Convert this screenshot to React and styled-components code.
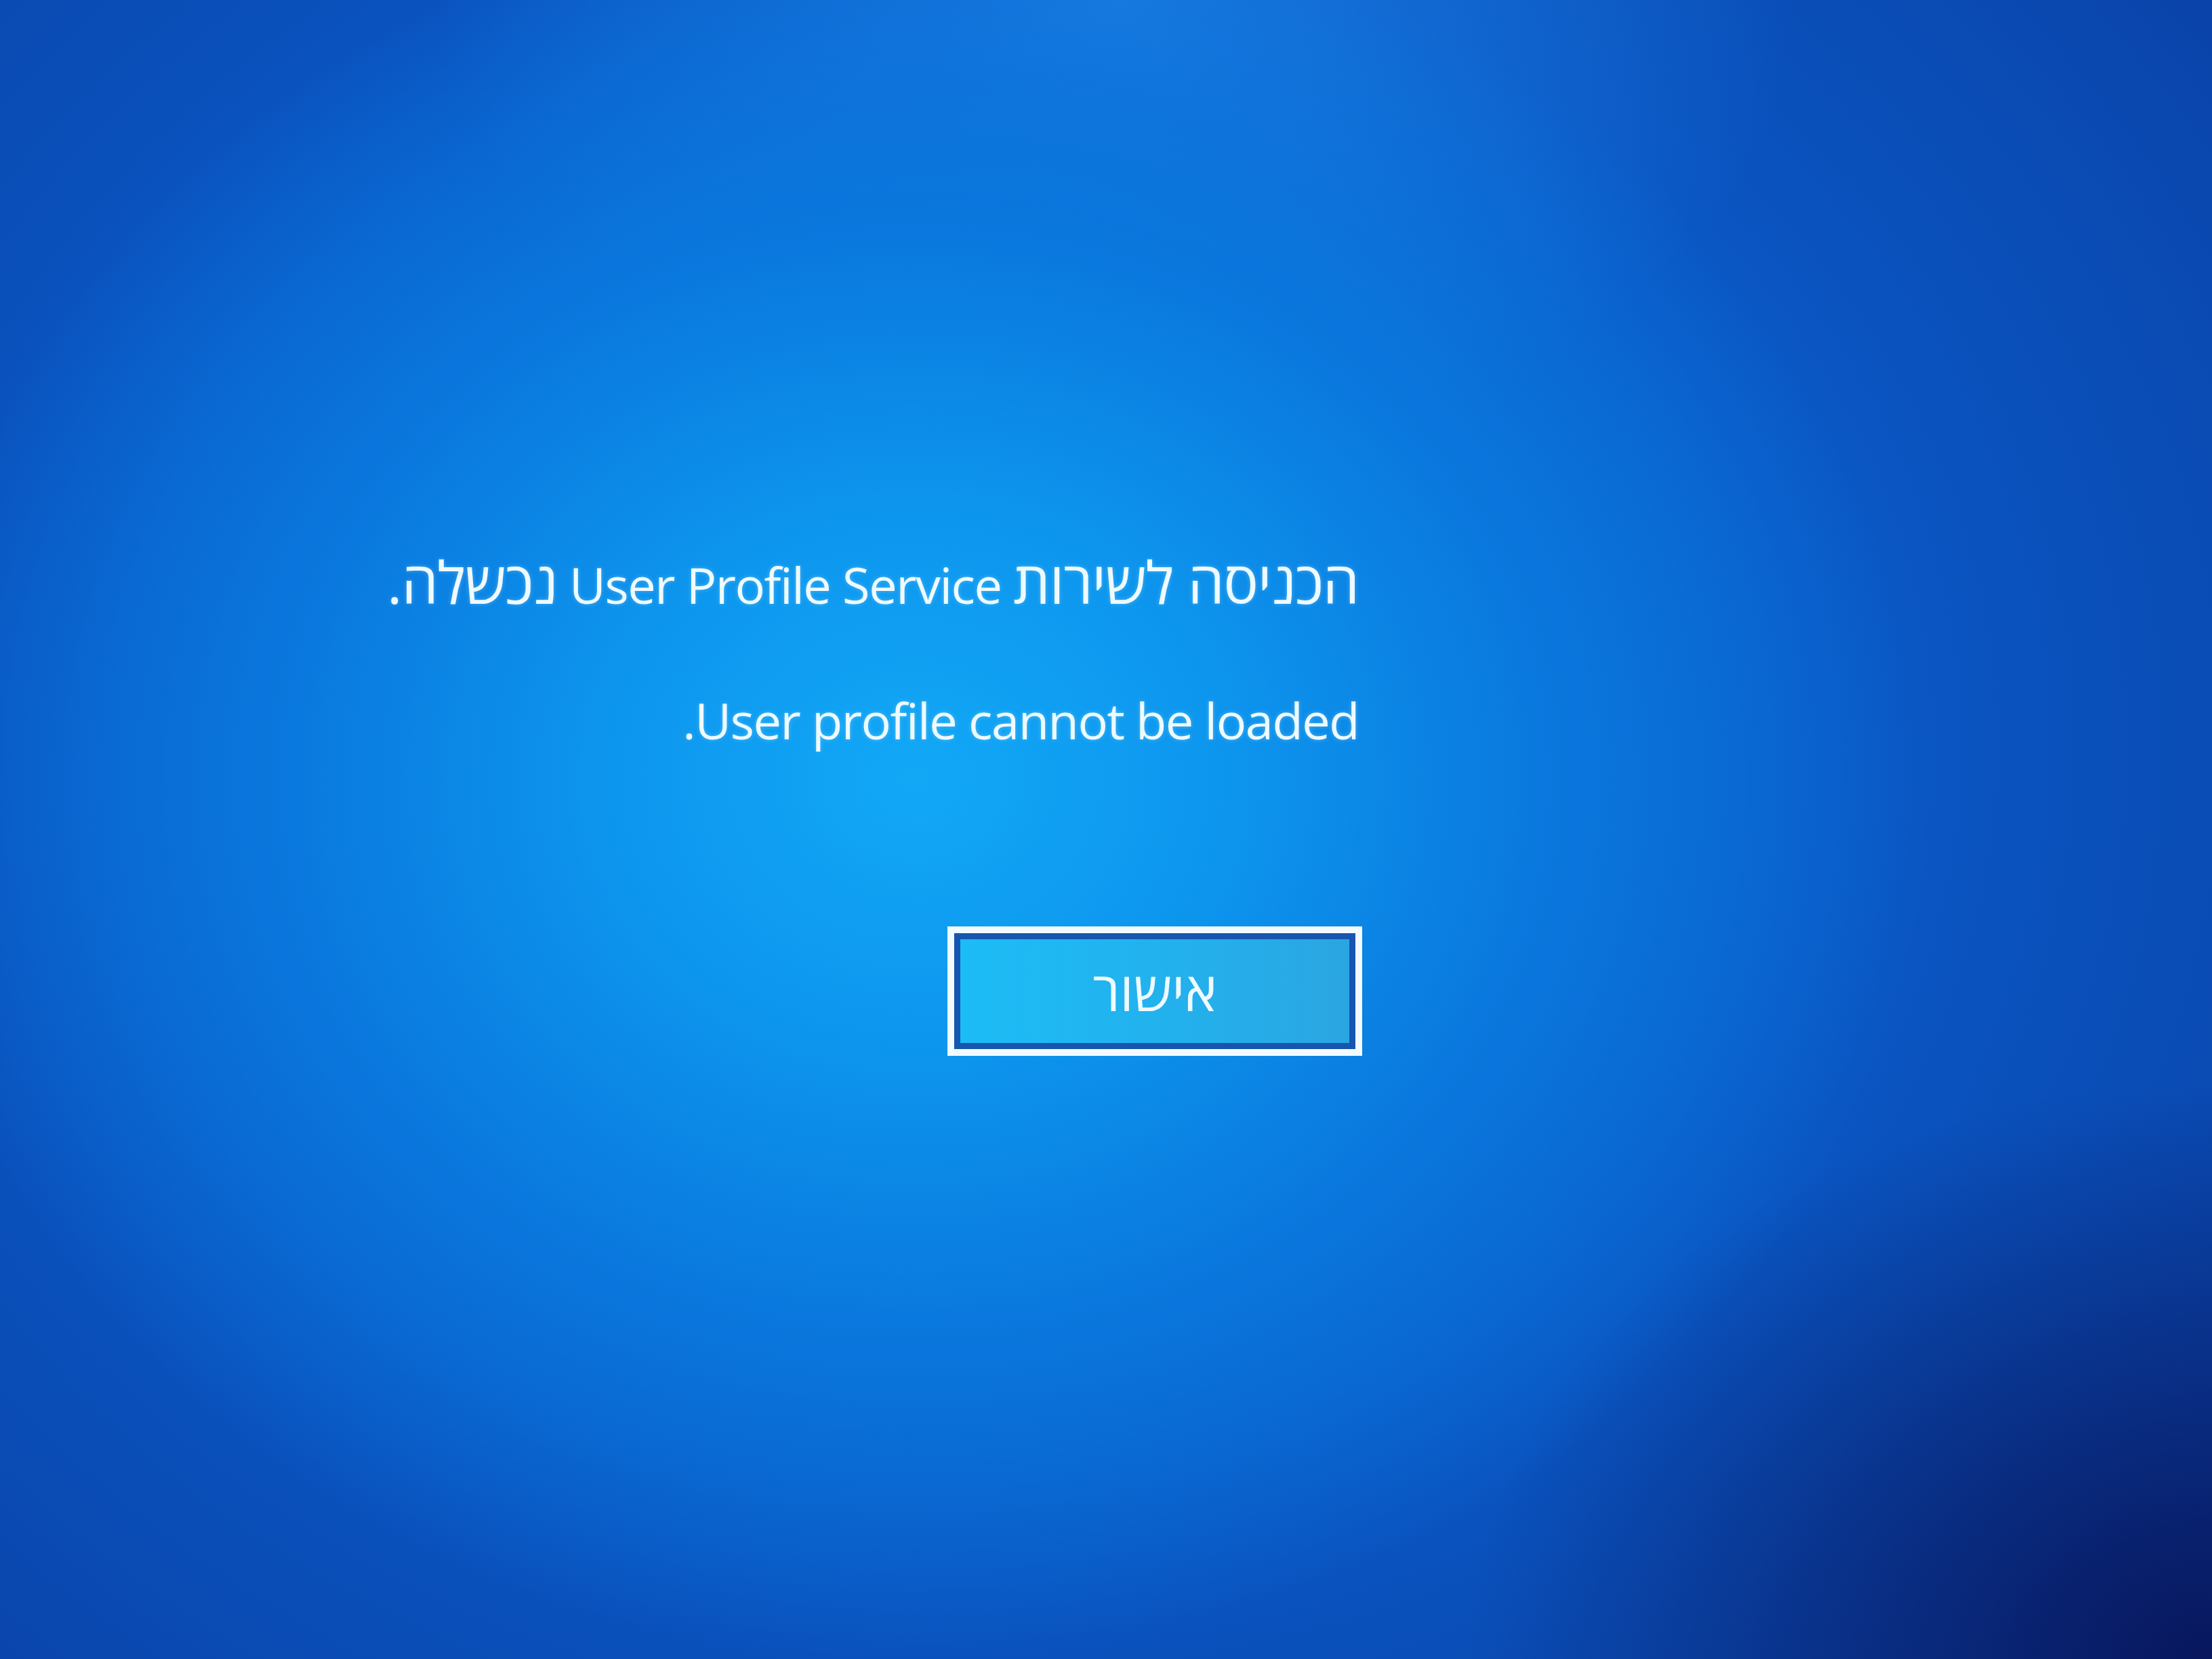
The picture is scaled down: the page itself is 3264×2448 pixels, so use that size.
import React from 'react'
import styled, { createGlobalStyle } from 'styled-components'

const GlobalStyle = createGlobalStyle`
  html, body {
    margin: 0;
    padding: 0;
    background: #0a4fbe;
  }
`;

const Screen = styled.main`
  width: 3264px;
  height: 2448px;
  overflow: hidden;
  box-sizing: border-box;
  padding: 810px 0 0 550px;
  font-family: "Open Sans", "DejaVu Sans", sans-serif;
  color: #eefaff;
  background:
    radial-gradient(ellipse 1100px 850px at 3264px 2448px, rgba(8, 18, 85, 0.9), rgba(8, 18, 85, 0) 100%),
    radial-gradient(ellipse 1500px 1300px at 1350px 1150px, #12a8f6 0%, #0d96ee 30%, #0a78de 62%, rgba(10, 90, 210, 0) 100%),
    radial-gradient(ellipse 1000px 700px at 1650px 0px, rgba(30, 135, 235, 0.7), rgba(30, 135, 235, 0) 100%),
    radial-gradient(ellipse 2300px 1950px at 1450px 1100px, #0a68d4 0%, #0a58c6 55%, #0a42a8 100%);
`;

const Dialog = styled.section`
  direction: rtl;
  width: 1460px;
  display: flex;
  flex-direction: column;
  align-items: flex-start;
`;

const Message = styled.p`
  margin: 0;
  padding-right: 5px;
  font-size: 74px;
  font-weight: 500;
  line-height: 96px;
  letter-spacing: -1.5px;
  white-space: nowrap;
  text-shadow: 0 0 6px rgba(200, 240, 255, 0.35);
`;

const Hebrew = styled.span`
  font-size: 1.16em;
  letter-spacing: -1px;
`;

const Gap = styled.div`
  height: ${p => p.$h}px;
`;

const OkButton = styled.button`
  width: 612px;
  height: 191px;
  box-sizing: border-box;
  border: 10px solid #f2fbff;
  padding: 0;
  background: #f2fbff;
  cursor: pointer;

  span {
    display: flex;
    align-items: center;
    justify-content: center;
    width: 100%;
    height: 100%;
    box-sizing: border-box;
    border: 9px solid #1656b0;
    background: linear-gradient(90deg, #1cbcf6 0%, #22b2ee 50%, #2aa6e2 100%);
    font-family: "Open Sans", "DejaVu Sans", sans-serif;
    font-size: 80px;
    font-weight: 500;
    color: #eefaff;
    direction: rtl;
    padding-bottom: 4px;
  }
`;

export default function App() {
  return (
    <>
      <GlobalStyle />
      <Screen>
        <Dialog>
          <Message>
            <Hebrew>הכניסה לשירות</Hebrew> User Profile Service <Hebrew>נכשלה.</Hebrew>
          </Message>
          <Gap $h={104} />
          <Message>User profile cannot be loaded.</Message>
          <Gap $h={256} />
          <OkButton>
            <span>אישור</span>
          </OkButton>
        </Dialog>
      </Screen>
    </>
  )
}
